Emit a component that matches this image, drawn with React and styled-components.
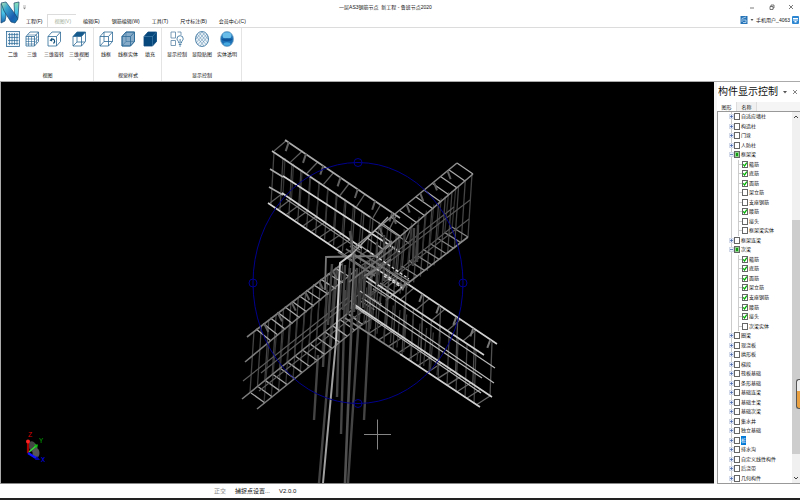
import React, { useState } from "react";
//Style
import styled, { createGlobalStyle } from "styled-components";

//Data
const menus = ["工程(F)", "视图(V)", "编辑(E)", "钢筋编辑(W)", "工具(T)", "尺寸标注(B)", "会员中心(C)"];

const groups = [
  {
    title: "视图",
    tools: [
      { name: "二维", icon: "grid" },
      { name: "三维", icon: "gridCube" },
      { name: "三维旋转", icon: "rotate" },
      { name: "三维视图", icon: "topCube", menu: true },
    ],
  },
  {
    title: "视觉样式",
    tools: [
      { name: "线框", icon: "wire" },
      { name: "线框实体", icon: "wireSolid" },
      { name: "填充", icon: "solid" },
    ],
  },
  {
    title: "显示控制",
    tools: [
      { name: "显示控制", icon: "display" },
      { name: "显隐贴图", icon: "texture" },
      { name: "实体透明", icon: "sphere" },
    ],
  },
];

const tree = [
  { name: "自适应墙柱" },
  { name: "构造柱" },
  { name: "门垛" },
  { name: "人防柱" },
  {
    name: "框架梁",
    children: [
      ["箍筋", true],
      ["底筋", true],
      ["面筋", true],
      ["架立筋", false],
      ["支座钢筋", false],
      ["腰筋", true],
      ["接头", false],
      ["框架梁实体", false],
    ],
  },
  { name: "框架连梁" },
  {
    name: "次梁",
    children: [
      ["箍筋", true],
      ["底筋", true],
      ["面筋", true],
      ["架立筋", true],
      ["支座钢筋", true],
      ["腰筋", true],
      ["接头", true],
      ["次梁实体", false],
    ],
  },
  { name: "圈梁" },
  { name: "现浇板" },
  { name: "拱形板" },
  { name: "梯段" },
  { name: "筏板基础" },
  { name: "条形基础" },
  { name: "基础连梁" },
  { name: "基础主梁" },
  { name: "基础次梁" },
  { name: "集水井" },
  { name: "独立基础" },
  { name: "桩", selected: true },
  { name: "排水沟" },
  { name: "自定义线性构件" },
  { name: "后浇带" },
  { name: "几何构件" },
];

//Ribbon icons
const CubeLines = () => (
  <path d="M1 5.5h8.5v9.5h-8.5zM1 5.5l4-4.5h8.5l-4 4.5M13.5 1v9.5l-4 4.5" />
);

const icons = {
  grid: (
    <>
      <rect x="0.5" y="0.5" width="13" height="15" fill="#eef5fa" />
      <path d="M3.5 2v12M6 2v12M8.5 2v12M11 2v12M2 3.5h10.500M2 6.500h10.500M2 9.500h10.500M2 12.500h10.500" strokeWidth="0.7" />
    </>
  ),
  gridCube: (
    <>
      <CubeLines />
      <path d="M3.500 5.500v9.500M6.500 5.500v9.500M1 8h8.500M1 10.500h8.500M1 13h8.500M2.500 4h8.500M11.500 3.500v9M9.500 9l4-4M9.500 12l4-4" strokeWidth="0.6" />
    </>
  ),
  rotate: (
    <>
      <CubeLines />
      <path d="M4 8.500c3-1.500 5 1.500 2.500 4" stroke="#12507c" strokeWidth="1.200" />
      <path d="M2.500 9.500l2.700-3v4z" fill="#12507c" stroke="none" />
    </>
  ),
  topCube: (
    <>
      <path d="M1 5.500l4-4.500h8.500l-4 4.500z" fill="#155a8c" />
      <path d="M1 5.500v9.500h8.500v-9.500M13.500 1v9.500l-4 4.500M5 6v5l-4 4M5 11h8" />
    </>
  ),
  wire: (
    <>
      <CubeLines />
      <path d="M5 1v9.500h8.500M5 10.500l-4 4.500" />
    </>
  ),
  wireSolid: (
    <>
      <path d="M1 5.500l4-4.500h8.500v9.500l-4 4.500h-8.500z" fill="#86abc8" />
      <CubeLines />
      <path d="M5 1v9.500h8.500M5 10.500l-4 4.500" strokeWidth="0.500" />
    </>
  ),
  solid: (
    <>
      <path d="M1 5.500l4-4.500h8.500v9.500l-4 4.500h-8.500z" fill="#07487c" stroke="#07487c" />
      <path d="M1 5.500h8.500v9.500M9.500 5.500l4-4.500" stroke="#5b93bd" strokeWidth="0.500" />
    </>
  ),
  display: (
    <>
      <path d="M1 1h4.500v6h-4.500zM1 9.500h4.500v5h-4.500zM7.500 1h3.500v3" stroke="#5b84a5" />
      <path d="M8.800 12c0-2-1.800-2.500-1.800-4.200a3 3 0 0 1 6.200 0c0 1.700-1.800 2.200-1.800 4.200z" fill="#fff" />
      <path d="M8.800 13.500h2.600M9.300 15h1.600M10.100 8v3.500" />
    </>
  ),
  texture: (
    <>
      <ellipse cx="7" cy="8" rx="6.500" ry="7.500" fill="#edf4f9" />
      <path d="M1 5l8 10M2 3l9.500 11M4 1.500l9 10.500M7 1l6.500 7.500M13 5l-8 10M12 3l-9.500 11M10 1.500l-9 10.500M7 1l-6.500 7.500" strokeWidth="0.400" />
    </>
  ),
  sphere: (
    <>
      <ellipse cx="7" cy="8" rx="6.500" ry="7.500" fill="#1c70b5" stroke="#7fa9c8" />
      <ellipse cx="7" cy="4.500" rx="4.500" ry="3.200" fill="#69bde9" stroke="none" />
      <path d="M1.500 8c4-1 7-1 11 0-1 3-10 3-11 0z" fill="#0f559a" stroke="none" />
      <ellipse cx="7" cy="13" rx="3.500" ry="1.700" fill="#45a9df" stroke="none" />
    </>
  ),
};

//Model helpers
const at = ([x1, y1, x2, y2], t) => [x1 + (x2 - x1) * t, y1 + (y2 - y1) * t];

//Stirrup legs between two bars
const Rungs = ({ from, to, count, color = "#555", width = 1.3 }) => {
  let d = "";
  for (let i = 0; i < count; i++) {
    const t = i / (count - 1);
    d += `M${at(from, t).join(" ")}L${at(to, t).join(" ")}`;
  }
  return <path d={d} stroke={color} strokeWidth={width} />;
};

//Short hooks hanging from a bar
const Hooks = ({ bar, count, dx, dy, color = "#606060" }) => {
  let d = "";
  for (let i = 0; i < count; i++) {
    const [x, y] = at(bar, (i + 0.1) / count);
    d += `M${x} ${y}l${dx} ${dy}`;
  }
  return <path d={d} stroke={color} strokeWidth="2" />;
};

const Bars = ({ list, color, width = 1.2 }) => (
  <path
    d={list.map(([a, b, c, e]) => `M${a} ${b}L${c} ${e}`).join("")}
    stroke={color}
    strokeWidth={width}
  />
);

const Model = () => (
  <Scene viewBox="1 82 713 401" fill="none" role="img" aria-label="三维钢筋模型">
    {/* upper left beam */}
    <Rungs from={[274, 152, 400, 237]} to={[271, 204, 396, 287]} count={15} color="#444" />
    <Rungs from={[285, 158, 405, 239]} to={[283, 194, 401, 274]} count={15} color="#333" />
    <Rungs from={[274, 151, 406, 240]} to={[287, 140, 412, 226]} count={9} color="#5e5e5e" />
    <Rungs from={[270, 203, 370, 271]} to={[283, 193, 385, 262]} count={13} color="#5e5e5e" />
    <Bars list={[[285, 140, 400, 218], [269, 187, 283, 195], [270, 169, 283, 177]]} color="#aaa" width={1.600} />
    <Bars list={[[272, 151, 370, 217]]} color="#bbb" width={1.600} />
    <Bars list={[[268, 203, 342, 253], [283, 176, 400, 252], [282, 193, 362, 248]]} color="#d4d4d4" width={1.600} />
    <Bars list={[[370, 217, 410, 244], [342, 253, 370, 272], [286, 199, 360, 250]]} color="#8a8a8a" />
    <Hooks bar={[287, 141, 408, 223]} count={7} dx={-3} dy={9} />

    {/* upper right beam */}
    <Rungs from={[472, 174, 372, 259]} to={[468, 237, 366, 322]} count={16} color="#444" />
    <Rungs from={[456, 186, 360, 266]} to={[452, 228, 356, 306]} count={14} color="#333" />
    <Rungs from={[468, 237, 360, 321]} to={[452, 227, 344, 311]} count={16} color="#858585" />
    <Rungs from={[457, 163, 358, 244]} to={[473, 174, 376, 257]} count={13} color="#a8a8a8" />
    <Bars list={[[470, 200, 372, 275], [469, 219, 370, 296], [454, 207, 360, 280], [452, 227, 365, 298]]} color="#565656" />
    <Bars list={[[457, 163, 356, 246], [473, 174, 376, 257], [468, 237, 386, 300]]} color="#8a8a8a" width={1.600} />
    <Hooks bar={[449, 170, 367, 237]} count={6} dx={3} dy={8} />

    {/* column bars behind the node */}
    <Bars
      list={[
        [318, 355, 314, 420],
        [345, 290, 341, 434],
        [340, 290, 337, 397],
        [327, 290, 323, 367],
        [371, 285, 364, 420],
        [337, 270, 319, 483],
        [362, 272, 348, 483],
      ]}
      color="#444"
      width={2.400}
    />

    {/* lower left beam */}
    <Rungs from={[254, 331, 350, 257]} to={[250, 393, 346, 318]} count={14} color="#444" />
    <Rungs from={[269, 342, 362, 265]} to={[264, 403, 358, 327]} count={14} color="#363636" />
    <Rungs from={[251, 393, 348, 314]} to={[265, 403, 362, 324]} count={14} color="#a0a0a0" />
    <Rungs from={[256, 329, 335, 268]} to={[271, 341, 350, 277]} count={12} color="#a8a8a8" />
    <Bars list={[[243, 381, 350, 296], [261, 373, 358, 295], [259, 391, 350, 319]]} color="#5c5c5c" />
    <Bars list={[[247, 337, 342, 264], [245, 362, 356, 270], [242, 399, 352, 310], [257, 409, 366, 321]]} color="#7c7c7c" width={1.600} />
    <Hooks bar={[263, 325, 345, 261]} count={6} dx={4} dy={8} />

    {/* lower right beam */}
    <Rungs from={[492, 342, 355, 250]} to={[490, 397, 352, 303]} count={9} color="#505050" />
    <Rungs from={[476, 350, 360, 272]} to={[474, 404, 357, 325]} count={14} color="#444" />
    <Rungs from={[476, 405, 350, 320]} to={[490, 396, 364, 311]} count={14} color="#666" />
    <Rungs from={[463, 341, 370, 278]} to={[476, 330, 383, 267]} count={7} color="#606060" />
    <Rungs from={[440, 337, 360, 283]} to={[437, 375, 357, 320]} count={13} color="#3a3a3a" />
    <Bars
      list={[
        [497, 344, 378, 264],
        [484, 355, 366, 277],
        [492, 397, 352, 303],
        [480, 407, 400, 354],
      ]}
      color="#d0d0d0"
      width={1.600}
    />
    <Bars list={[[495, 368, 366, 281], [494, 383, 360, 291], [482, 378, 362, 298], [481, 393, 354, 306]]} color="#b8b8b8" />
    <Bars list={[[400, 354, 345, 318]]} color="#858585" width={1.600} />
    <Hooks bar={[492, 341, 390, 272]} count={6} dx={-3} dy={8} color="#777" />

    {/* node */}
    <Bars list={[[377, 242, 377, 285], [384, 235, 384, 281], [414, 228, 413, 266], [418, 225, 417, 262], [345, 265, 343, 310], [350, 268, 348, 315], [357, 268, 354, 312], [365, 264, 363, 308], [332, 264, 328, 325]]} color="#444" width={2.400} />
    <Bars list={[[346, 249, 405, 287], [350, 246, 409, 284], [349, 282, 395, 247], [366, 277, 391, 259], [338, 252, 375, 276]]} color="#6c6c6c" width={1.600} />
    <path d="M367 250l42 29M372 266l27 18M384 276l18 12" stroke="#ddd" strokeWidth="1.300" strokeDasharray="3 2" />
    <path d="M325 290l1-33 50-1 16-15" stroke="#777" strokeWidth="1.800" />
    <path d="M352 254l23 14M364 276l14-8" stroke="#777" strokeWidth="1.500" />
    <path d="M350 231l4 32-9 220" stroke="#505050" strokeWidth="2.600" />
    <path d="M352 240l2 24-3 45" stroke="#777" />
    <path d="M388 217l-36 37" stroke="#aaa" strokeWidth="1.300" />
    <path d="M352 254l-12 9-4 78" stroke="#c8c8c8" strokeWidth="2" />
    <path d="M336 341l-13 142" stroke="#a0a0a0" strokeWidth="2" />

    {/* orbit */}
    <g stroke="#00008c">
      <ellipse cx="358" cy="283" rx="105" ry="120.500" />
      <circle cx="358" cy="162.500" r="4" />
      <circle cx="358" cy="403.500" r="4" />
      <circle cx="253" cy="283" r="4" />
      <circle cx="463" cy="283" r="4" />
    </g>

    {/* cursor */}
    <path d="M377.500 419.500v30M364 434.500h27" stroke="#858585" />

    {/* axes */}
    <ellipse cx="33" cy="447" rx="4" ry="6" fill="#444" transform="rotate(-25 33 447)" />
    <ellipse cx="36" cy="453" rx="3.500" ry="5" fill="#555" />
    <path d="M28 453v-11" stroke="#a00" strokeWidth="2.200" />
    <circle cx="28" cy="441.500" r="2" fill="#f22" />
    <path d="M29 452l7-6" stroke="#3d3" strokeWidth="1.600" />
    <path d="M34 444.500l4 0-1 4z" fill="#1b1" />
    <path d="M28 453l8 5" stroke="#11f" strokeWidth="2.400" />
    <path d="M35 460l2-4 3 4z" fill="#00a" />
    <AxisLabel x="28" y="437" fill="#d00">Z</AxisLabel>
    <AxisLabel x="39" y="443" fill="#0a0">Y</AxisLabel>
    <AxisLabel x="41" y="462" fill="#00f">X</AxisLabel>
  </Scene>
);

const Check = ({ name, value, selected, ...rest }) => {
  const [checked, setChecked] = useState(value);
  return (
    <CheckLabel {...rest}>
      <CheckBox type="checkbox" checked={checked} onChange={() => setChecked(!checked)} />
      <Name $selected={selected}>{name}</Name>
    </CheckLabel>
  );
};

const Tree = () => (
  <TreeList>
    {tree.map((item) => (
      <React.Fragment key={item.name}>
        <TreeRow>
          <Expander type="button" aria-label={item.name}>
            <svg viewBox="0 0 5 5">
              <rect width="5" height="5" rx="1" fill="#b9c2d6" />
              <rect x="0.500" y="0.500" width="4" height="4" fill="#eef2fb" />
              <path d={item.children ? "M1 2.500h3" : "M1 2.500h3M2.500 1v3"} stroke="#3c5fa8" strokeWidth="0.700" />
            </svg>
          </Expander>
          {item.children ? (
            <CheckLabel>
              <CheckBox type="checkbox" $partial />
              <Name>{item.name}</Name>
            </CheckLabel>
          ) : (
            <Check name={item.name} value={false} selected={item.selected} />
          )}
        </TreeRow>
        {item.children?.map(([name, value]) => (
          <TreeRow key={name} $child>
            <Check name={name} value={value} />
          </TreeRow>
        ))}
      </React.Fragment>
    ))}
  </TreeList>
);

const App = () => {
  const [menu, setMenu] = useState("视图(V)");

  return (
    <Page>
      <GlobalStyle />
      <Header>
        <Logo viewBox="0 0 20 25" aria-label="鲁班节点">
          <defs>
            <linearGradient id="logo" x1="0" y1="0" x2="1" y2="1">
              <stop offset="0" stopColor="#b9e8b0" />
              <stop offset="0.3" stopColor="#3ba8cf" />
              <stop offset="0.7" stopColor="#1a5db0" />
              <stop offset="1" stopColor="#0f7fb5" />
            </linearGradient>
            <linearGradient id="logoSide" x1="0" y1="0" x2="0" y2="1">
              <stop offset="0" stopColor="#8fe0b0" />
              <stop offset="0.5" stopColor="#48c2e8" />
              <stop offset="1" stopColor="#1763ae" />
            </linearGradient>
          </defs>
          <path d="M1 4l3-1 2 13-1 5-4 2z" fill="url(#logoSide)" stroke="#17466d" strokeWidth="0.700" />
          <path d="M14 3l5-1-1 16-3 4z" fill="url(#logoSide)" stroke="#17466d" strokeWidth="0.700" />
          <path d="M1 3l5-1 9 12 3 5-3 4-4-1-7-11z" fill="url(#logo)" stroke="#17466d" strokeWidth="0.700" />
        </Logo>
        <HeaderRows>
          <TitleRow>
            <QuickButton type="button" aria-label="快速访问">
              <svg viewBox="0 0 5 5"><path d="M1 1h3" stroke="#888" strokeWidth="0.600" /><path d="M1 2.500h3l-1.500 2z" fill="#888" /></svg>
            </QuickButton>
            <Title>一层AS3钢筋节点&nbsp; 新工程 - 鲁班节点2020</Title>
            <WindowButtons>
              <WindowButton type="button" aria-label="最小化">
                <svg viewBox="0 0 6 6"><path d="M1 4h4" /></svg>
              </WindowButton>
              <WindowButton type="button" aria-label="还原">
                <svg viewBox="0 0 6 6"><path d="M1 2.500h3v3h-3zM2 2.500v-1.500h3v3h-1" /></svg>
              </WindowButton>
              <WindowButton type="button" aria-label="关闭">
                <svg viewBox="0 0 6 6"><path d="M1 1l4 4M5 1l-4 4" /></svg>
              </WindowButton>
            </WindowButtons>
          </TitleRow>
          <MenuRow>
            {menus.map((name) => (
              <MenuTab key={name} type="button" $active={name === menu} onClick={() => setMenu(name)}>
                {name}
              </MenuTab>
            ))}
            <User>
              <svg width="8" height="8" viewBox="0 0 8 8">
                <rect x="0.500" width="7" height="8" fill="#2874b8" />
                <path d="M2 6v-3.500l4-1.500M3 4h3v2.500h-3" stroke="#d7eefb" strokeWidth="0.700" fill="none" />
              </svg>
              <svg width="4" height="4" viewBox="0 0 4 4"><path d="M0.500 1h3l-1.500 2z" fill="#555" /></svg>
              <span>手机用户_4063</span>
              <svg width="7" height="8" viewBox="0 0 7 8">
                <rect width="7" height="8" rx="1" fill="#2d86d2" />
                <path d="M1 2.500h5M1 4h5" stroke="#fff" />
                <path d="M2.500 5h2v1.500h-2z" fill="#fff" />
              </svg>
            </User>
          </MenuRow>
        </HeaderRows>
      </Header>

      <Ribbon>
        {groups.map((group) => (
          <Group key={group.title}>
            <Tools>
              {group.tools.map((tool) => (
                <Tool key={tool.name} type="button">
                  <ToolIcon viewBox="0 0 14 16">{icons[tool.icon]}</ToolIcon>
                  <span>{tool.name}</span>
                  {tool.menu && (
                    <svg width="5" height="4" viewBox="0 0 5 4">
                      <path d="M0.500 0.500h4l-2 2.500z" fill="#aaa" />
                    </svg>
                  )}
                </Tool>
              ))}
            </Tools>
            <GroupTitle>{group.title}</GroupTitle>
          </Group>
        ))}
      </Ribbon>

      <Main>
        <Viewport>
          <Model />
        </Viewport>
        <Panel>
          <PanelHeader>
            <h2>构件显示控制</h2>
            <PanelButton type="button" aria-label="选项">
              <svg viewBox="0 0 6 6"><path d="M1 2h4l-2 2.500z" fill="#555" /></svg>
            </PanelButton>
            <PanelButton type="button" aria-label="关闭面板">
              <svg viewBox="0 0 6 6"><path d="M1 1l4 4M5 1l-4 4" stroke="#666" strokeWidth="0.800" /></svg>
            </PanelButton>
          </PanelHeader>
          <PanelTabs>
            <PanelTab type="button" $active>图形</PanelTab>
            <PanelTab type="button">名称</PanelTab>
          </PanelTabs>
          <PanelBody>
            <Tree />
            <ScrollBar>
              <ScrollButton type="button" aria-label="向上">
                <svg viewBox="0 0 6 6"><path d="M1 4l2-2 2 2" fill="none" stroke="#444" /></svg>
              </ScrollButton>
              <ScrollSpace $grow={98} />
              <ScrollThumb />
              <ScrollSpace $grow={19} />
              <ScrollButton type="button" aria-label="向下">
                <svg viewBox="0 0 6 6"><path d="M1 2l2 2 2-2" fill="none" stroke="#444" /></svg>
              </ScrollButton>
            </ScrollBar>
            <Meter />
          </PanelBody>
        </Panel>
      </Main>

      <Status>
        <Mode>正交</Mode>
        <span>捕捉点设置...</span>
        <span>V2.0.0</span>
      </Status>
    </Page>
  );
};

const GlobalStyle = createGlobalStyle`
  * {
    box-sizing: border-box;
    margin: 0;
    padding: 0;
  }
  body {
    font-family: "Liberation Sans", "Noto Sans CJK SC", sans-serif;
    font-size: 5px;
    line-height: 8px;
    color: #111;
    background: white;
  }
  button {
    font: inherit;
    color: inherit;
    border: none;
    background: none;
    white-space: nowrap;
  }
  svg {
    display: block;
    flex: none;
  }
`;

const Page = styled.div`
  display: flex;
  flex-direction: column;
  height: 100vh;
`;

const Header = styled.header`
  display: flex;
  height: 28px;
  border-bottom: 1px solid #dcdcdc;
`;

const Logo = styled.svg`
  width: 20px;
  height: 25px;
`;

const HeaderRows = styled.div`
  flex: 1;
  display: flex;
  flex-direction: column;
`;

const TitleRow = styled.div`
  display: flex;
  align-items: center;
  height: 15px;
`;

const QuickButton = styled.button`
  width: 5px;
  height: 5px;
  margin-left: 2px;
`;

const Title = styled.h1`
  flex: 1;
  font-size: 5px;
  font-weight: normal;
  text-align: center;
`;

const WindowButtons = styled.div`
  display: flex;
  justify-content: space-between;
  width: 56px;
  padding: 0 6px 0 5px;
`;

const WindowButton = styled.button`
  width: 6px;
  height: 6px;
  svg {
    fill: none;
    stroke: #444;
    stroke-width: 0.7;
  }
`;

const MenuRow = styled.nav`
  display: flex;
  height: 13px;
`;

const MenuTab = styled.button`
  padding: 0 6px;
  line-height: 11px;
  border: 1px solid ${(props) => (props.$active ? "#dcdcdc" : "transparent")};
  border-width: 1px 1px 0;
  margin: 0 -1px;
  background: white;
  color: ${(props) => (props.$active ? "#a4b09d" : "#111")};
`;

const User = styled.div`
  display: flex;
  align-items: center;
  gap: 2px;
  margin-left: auto;
  padding: 0 1px 1px 0;
`;

const Ribbon = styled.div`
  display: flex;
  height: 54px;
  padding-left: 1px;
  border-bottom: 1px solid #aaa;
`;

const Group = styled.section`
  display: flex;
  flex-direction: column;
  justify-content: space-between;
  padding: 3px 4px 2px 5px;
  border-right: 1px solid #e4e4e4;
`;

const Tools = styled.div`
  display: flex;
  gap: 5px;
`;

const Tool = styled.button`
  display: flex;
  flex-direction: column;
  align-items: center;
  gap: 3px;
  span + svg {
    margin-top: -3px;
  }
`;

const ToolIcon = styled.svg`
  width: 14px;
  height: 16px;
  fill: none;
  stroke: #2c6a97;
  stroke-width: 0.8;
`;

const GroupTitle = styled.p`
  text-align: center;
`;

const Main = styled.main`
  flex: 1;
  display: flex;
  min-height: 0;
`;

const Viewport = styled.div`
  flex: 1;
  min-width: 0;
  background: black;
  border-left: 1px solid #aaa;
  border-bottom: 1px solid #888;
`;

const Scene = styled.svg`
  width: 100%;
  height: 100%;
`;

const AxisLabel = styled.text`
  font-family: "Liberation Mono", monospace;
  font-size: 7px;
`;

const Panel = styled.aside`
  display: flex;
  flex-direction: column;
  width: 86px;
  padding-left: 3px;
  background: #f5f5f5;
`;

const PanelHeader = styled.div`
  display: flex;
  align-items: center;
  gap: 4px;
  height: 20px;
  padding: 0 2px 0 1px;
  background: white;
  h2 {
    flex: 1;
    font-size: 10px;
    line-height: 16px;
    font-weight: normal;
    white-space: nowrap;
  }
`;

const PanelButton = styled.button`
  width: 6px;
  height: 6px;
`;

const PanelTabs = styled.div`
  display: flex;
  height: 9px;
`;

const PanelTab = styled.button`
  width: 20px;
  border-right: 1px solid #ddd;
  background: ${(props) => (props.$active ? "white" : "#f0f0f0")};
`;

const PanelBody = styled.div`
  position: relative;
  flex: 1;
  display: flex;
  min-height: 0;
  border: 1px solid #999;
  border-right: none;
  background: white;
`;

const TreeList = styled.ul`
  flex: 1;
  display: grid;
  grid-auto-rows: 1fr;
  padding-left: 11px;
  list-style: none;
`;

const TreeRow = styled.li`
  display: flex;
  align-items: center;
  min-height: 0;
  padding-left: ${(props) => (props.$child ? "13px" : "0")};
  background-image: linear-gradient(#ccc, #ccc), linear-gradient(#ccc, #ccc), linear-gradient(#ccc, #ccc);
  background-repeat: no-repeat;
  background-size: 1px 100%, ${(props) => (props.$child ? "1px 100%, 4px 1px" : "0 0, 0 0")};
  background-position: 2px 0, 9px 0, 9px 50%;
`;

const Expander = styled.button`
  width: 5px;
  height: 5px;
`;

const CheckLabel = styled.label`
  display: flex;
  align-items: center;
  gap: 1px;
`;

const CheckBox = styled.input`
  appearance: none;
  width: 6px;
  height: 7px;
  border: 1px solid #666;
  background: ${(props) => (props.$partial ? "#12a012" : "white")};
  box-shadow: ${(props) => (props.$partial ? "inset 0 0 0 1px #8fd08f" : "none")};
  &:checked {
    background: white center / 100% 100% no-repeat
      url("data:image/svg+xml,%3Csvg xmlns='http://www.w3.org/2000/svg' viewBox='0 0 4 5'%3E%3Cpath d='M.2 2.300l1.300 1.700 2.300-3.500' fill='none' stroke='%2300b000' stroke-width='1.300'/%3E%3C/svg%3E");
  }
`;

const Name = styled.span`
  line-height: 9px;
  white-space: nowrap;
  color: ${(props) => (props.$selected ? "white" : "#111")};
  background: ${(props) => (props.$selected ? "#0078d7" : "none")};
`;

const ScrollBar = styled.div`
  display: flex;
  flex-direction: column;
  width: 8px;
  background: #f0f0f0;
`;

const ScrollButton = styled.button`
  height: 10px;
  padding: 2px 1px;
`;

const ScrollSpace = styled.div`
  flex: ${(props) => props.$grow};
`;

const ScrollThumb = styled.div`
  flex: 235;
  background: #cdcdcd;
`;

const Meter = styled.div`
  position: absolute;
  right: 0;
  top: 72%;
  width: 4px;
  height: 30px;
  border: 1px solid #555;
  border-right: none;
  border-radius: 3px 0 0 3px;
  background: linear-gradient(#eee 40%, #e8a040 40%);
`;

const Status = styled.footer`
  display: flex;
  align-items: center;
  gap: 9px;
  height: 16px;
  padding-left: 214px;
  border-bottom: 2px solid #222;
  font-size: 6px;
`;

const Mode = styled.span`
  color: #888;
`;

export default App;
